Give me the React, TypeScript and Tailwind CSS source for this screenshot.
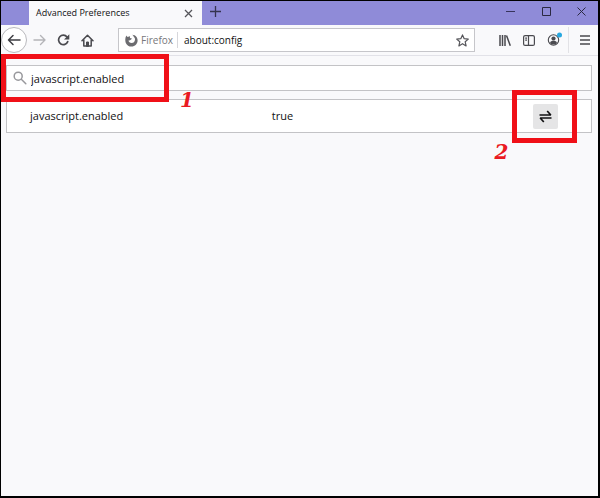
import { useState } from "react";

interface Pref {
  name: string;
  value: boolean;
}

const iconButton = "flex h-6 w-6 shrink-0 items-center justify-center text-[#4a4a4f]";

export default function App() {
  const [search, setSearch] = useState("javascript.enabled");
  const [url, setUrl] = useState("about:config");
  const [prefs, setPrefs] = useState<Pref[]>([{ name: "javascript.enabled", value: true }]);

  const toggle = (name: string) => {
    setPrefs((prev) => prev.map((p) => (p.name === name ? { ...p, value: !p.value } : p)));
  };

  return (
    <div className="flex min-h-screen flex-col border-t border-r-2 border-b-2 border-l border-black bg-[#f9f9fb] font-['Open_Sans','Noto_Sans',sans-serif] text-[#111113]">
      {/* Title bar */}
      <header className="flex h-6 items-stretch bg-[#8f8bd8] pl-7">
        <div className="flex w-[173px] items-center justify-between bg-[#f9f9fb] pr-2 pl-[7px]">
          <span className="text-[9px] leading-3 whitespace-nowrap">Advanced Preferences</span>
          <button type="button" aria-label="Close tab" className="flex h-3 w-3 items-center justify-center">
            <svg width="9" height="9" viewBox="0 0 9 9" fill="none" stroke="#55555a" strokeWidth="1.3">
              <path d="M1 1l7 7M8 1L1 8" />
            </svg>
          </button>
        </div>
        <button type="button" aria-label="New tab" className="flex w-[26px] items-center justify-center pb-1">
          <svg width="11" height="11" viewBox="0 0 11 11" fill="none" stroke="#35334f" strokeWidth="1.3">
            <path d="M5.500 0v11M0 5.500h11" />
          </svg>
        </button>
        <div className="ml-auto flex pb-1">
          <button type="button" aria-label="Minimize" className="flex w-9 items-center justify-center">
            <svg width="9" height="9" viewBox="0 0 9 9" stroke="#37345c">
              <path d="M0 4.5h9" />
            </svg>
          </button>
          <button type="button" aria-label="Maximize" className="flex w-9 items-center justify-center">
            <svg width="9" height="9" viewBox="0 0 9 9" fill="none" stroke="#2b2942">
              <path d="M.5 .5h8v8h-8z" />
            </svg>
          </button>
          <button type="button" aria-label="Close" className="flex w-[34px] items-center justify-center">
            <svg width="9" height="9" viewBox="0 0 9 9" fill="none" stroke="#2b2942">
              <path d="M.5 .5l8 8M8.5 .5l-8 8" />
            </svg>
          </button>
        </div>
      </header>

      {/* Navigation toolbar */}
      <nav className="flex h-[31px] items-center border-b border-[#e2e2e8] bg-[#f9f9fb]">
        <button type="button" aria-label="Back" className="flex h-[26px] w-[26px] shrink-0 items-center justify-center rounded-full border border-[#b9b9bd] bg-white">
          <svg width="14" height="12" viewBox="0 0 14 12" fill="none" stroke="#3e3e43" strokeWidth="1.5" strokeLinecap="round" strokeLinejoin="round">
            <path d="M13 6H1.5M6 1.5L1.5 6 6 10.5" />
          </svg>
        </button>
        <button type="button" aria-label="Forward" className={iconButton}>
          <svg width="13" height="12" viewBox="0 0 13 12" fill="none" stroke="#b4b4b8" strokeWidth="1.4" strokeLinecap="round" strokeLinejoin="round">
            <path d="M1 6h11M7.500 1.500L12 6 7.500 10.500" />
          </svg>
        </button>
        <button type="button" aria-label="Reload" className={iconButton}>
          <svg width="13" height="12" viewBox="0 0 13 12">
            <path d="M10 3A4.700 4.700 0 1 0 10.700 7.600" fill="none" stroke="#4a4a4f" strokeWidth="1.7" strokeLinecap="round" />
            <path d="M12.300 .3v5.200H7z" fill="#4a4a4f" />
          </svg>
        </button>
        <button type="button" aria-label="Home" className={iconButton}>
          <svg width="13" height="13" viewBox="0 0 13 13" fill="none" stroke="#4a4a4f" strokeWidth="1.5" strokeLinecap="round" strokeLinejoin="round">
            <path d="M1 6.800L6.500 1.200 12 6.800M2.800 6v6h7.400V6" />
            <path d="M5.500 12V8h2v4z" fill="#4a4a4f" strokeWidth="1" />
          </svg>
        </button>

        <div className="ml-[19px] flex h-6 min-w-0 flex-1 items-center border border-[#c6c6ca] bg-white pr-1 pl-1.5">
          <svg className="shrink-0" width="13" height="13" viewBox="0 0 13 13">
            <path d="M1.400 1.600C0 3.600 0 7 .8 8.900 1.900 11.300 4 12.600 6.500 12.600c3.500 0 6.100-2.700 6.100-6 0-2.300-1-4.200-3-5.300-.8-.4-1.800-.6-2.400-.6 1 .6 1.500 1.300 1.500 2 1 .8 1.400 1.800 1.300 3C9.800 7.700 8.500 9 6.600 9 4.800 9 3.700 7.900 3.500 6.500c.8.200 1.600 0 2.200-.7l1-.9c.2-.5-.1-.7-.6-.7-.7-.1-1.200-.4-1.200-1l.2-.9c-.9.100-1.600.4-2.200.8C2.200 2.900 1.700 2.300 1.400 1.600z" fill="#6c6c70" />
          </svg>
          <span className="ml-[3px] text-[10px] leading-4 text-[#77777b]">Firefox</span>
          <span className="ml-1 h-4 w-px bg-[#d7d7db]" />
          <input
            type="text"
            aria-label="Address"
            value={url}
            onChange={(e) => setUrl(e.target.value)}
            className="ml-1.5 h-5 min-w-0 flex-1 bg-transparent text-[10px] outline-none"
          />
          <button type="button" aria-label="Bookmark this page" className="flex h-4 w-4 shrink-0 items-center justify-center">
            <svg width="13" height="13" viewBox="0 0 13 13" fill="none" stroke="#55555a" strokeWidth="1.2" strokeLinejoin="round">
              <path d="M6.500 .9l1.700 3.800 4.100.4-3.100 2.700.9 4.100-3.600-2.200-3.600 2.200.9-4.100L.7 5.100l4.100-.4z" />
            </svg>
          </button>
        </div>

        <div className="ml-[18px] flex items-center pr-px">
          <button type="button" aria-label="Library" className={iconButton}>
            <svg width="12" height="11" viewBox="0 0 12 11" fill="none" stroke="#4a4a4f" strokeWidth="1.5">
              <path d="M1 0v11M3.500 0v11M6 0v11M7.500 .5L11.300 10.700" />
            </svg>
          </button>
          <button type="button" aria-label="Sidebars" className={iconButton}>
            <svg width="12" height="11" viewBox="0 0 12 11" fill="none" stroke="#4a4a4f" strokeWidth="1.2">
              <rect x=".6" y=".6" width="10.8" height="9.8" rx="1.5" />
              <path d="M5.500 .6v9.800M2.200 3.200h1.800M2.200 5.200h1.800" />
            </svg>
          </button>
          <button type="button" aria-label="Account" className="flex h-6 w-[27px] shrink-0 items-center justify-center">
            <svg width="17" height="16" viewBox="0 0 17 16">
              <circle cx="7.5" cy="8" r="5.2" fill="none" stroke="#4a4a4f" strokeWidth="1.1" />
              <circle cx="7.5" cy="6.500" r="2.100" fill="#4a4a4f" />
              <path d="M4 10.900c.5-1.700 1.800-2.100 3.500-2.100s3 .4 3.500 2.100c-1 1.100-2.200 1.600-3.500 1.600S5 12 4 10.900z" fill="#4a4a4f" />
              <circle cx="13.5" cy="3" r="2.500" fill="#27a8e0" />
            </svg>
          </button>
          <span className="h-[26px] w-px bg-[#e2e2e6]" />
          <button type="button" aria-label="Open menu" className="ml-1 flex h-6 w-6 shrink-0 items-center justify-center">
            <svg width="10" height="10" viewBox="0 0 10 10" stroke="#4a4a4f" strokeWidth="1.5">
              <path d="M0 1h10M0 5h10M0 9h10" />
            </svg>
          </button>
        </div>
      </nav>

      {/* Preferences */}
      <main className="flex flex-1 flex-col gap-2 pt-[9px] pr-1.5 pb-2 pl-[5px] text-[11px]">
        <div className="relative flex h-[26px] items-center border border-[#c3c3c6] bg-white pl-1.5">
          <svg width="14" height="14" viewBox="0 0 14 14" fill="none" stroke="#98989c" strokeWidth="1.5" strokeLinecap="round">
            <circle cx="5.200" cy="5.200" r="4" />
            <path d="M8.300 8.300L12.800 12.800" />
          </svg>
          <input
            type="text"
            aria-label="Search preference name"
            value={search}
            onChange={(e) => setSearch(e.target.value)}
            className="ml-1 h-5 min-w-0 flex-1 bg-transparent outline-none"
          />
          <div className="pointer-events-none absolute -top-3 -left-1.5 z-10 h-12 w-[168px] border-[5px] border-[#f01018]" />
          <span className="absolute top-4 left-[173px] z-10 font-['DejaVu_Serif',serif] text-[20px] leading-9 font-bold text-[#ea1a22] italic">1</span>
        </div>

        <div className="border border-[#c3c3c6] bg-white">
          <table className="w-full table-fixed">
            <tbody>
              {prefs.map((pref) => (
                <tr key={pref.name} className="h-8">
                  <th scope="row" className="w-[45%] p-0 pl-[23px] text-left font-normal">{pref.name}</th>
                  <td className="w-[45%] p-0 pl-0.5">{String(pref.value)}</td>
                  <td className="w-[10%] p-0">
                    <div className="relative h-[25px] w-[25px]">
                      <button
                        type="button"
                        aria-label={"Toggle " + pref.name}
                        onClick={() => toggle(pref.name)}
                        className="flex h-full w-full items-center justify-center rounded-xs bg-[#e5e5e6]"
                      >
                        <svg width="13" height="13" viewBox="0 0 13 13" fill="none" stroke="#111113" strokeWidth="1.700" strokeLinejoin="bevel">
                          <path d="M.5 5h11.300L8.200 1M12.500 8H1.200l3.600 4" />
                        </svg>
                      </button>
                      <div className="pointer-events-none absolute -top-[14px] -left-[21px] z-10 h-[53px] w-[65px] border-[5px] border-[#f01018]" />
                      <span className="absolute top-[30px] -left-[38px] z-10 font-['DejaVu_Serif',serif] text-[20px] leading-9 font-bold text-[#ea1a22] italic">2</span>
                    </div>
                  </td>
                </tr>
              ))}
            </tbody>
          </table>
        </div>
      </main>
    </div>
  );
}
